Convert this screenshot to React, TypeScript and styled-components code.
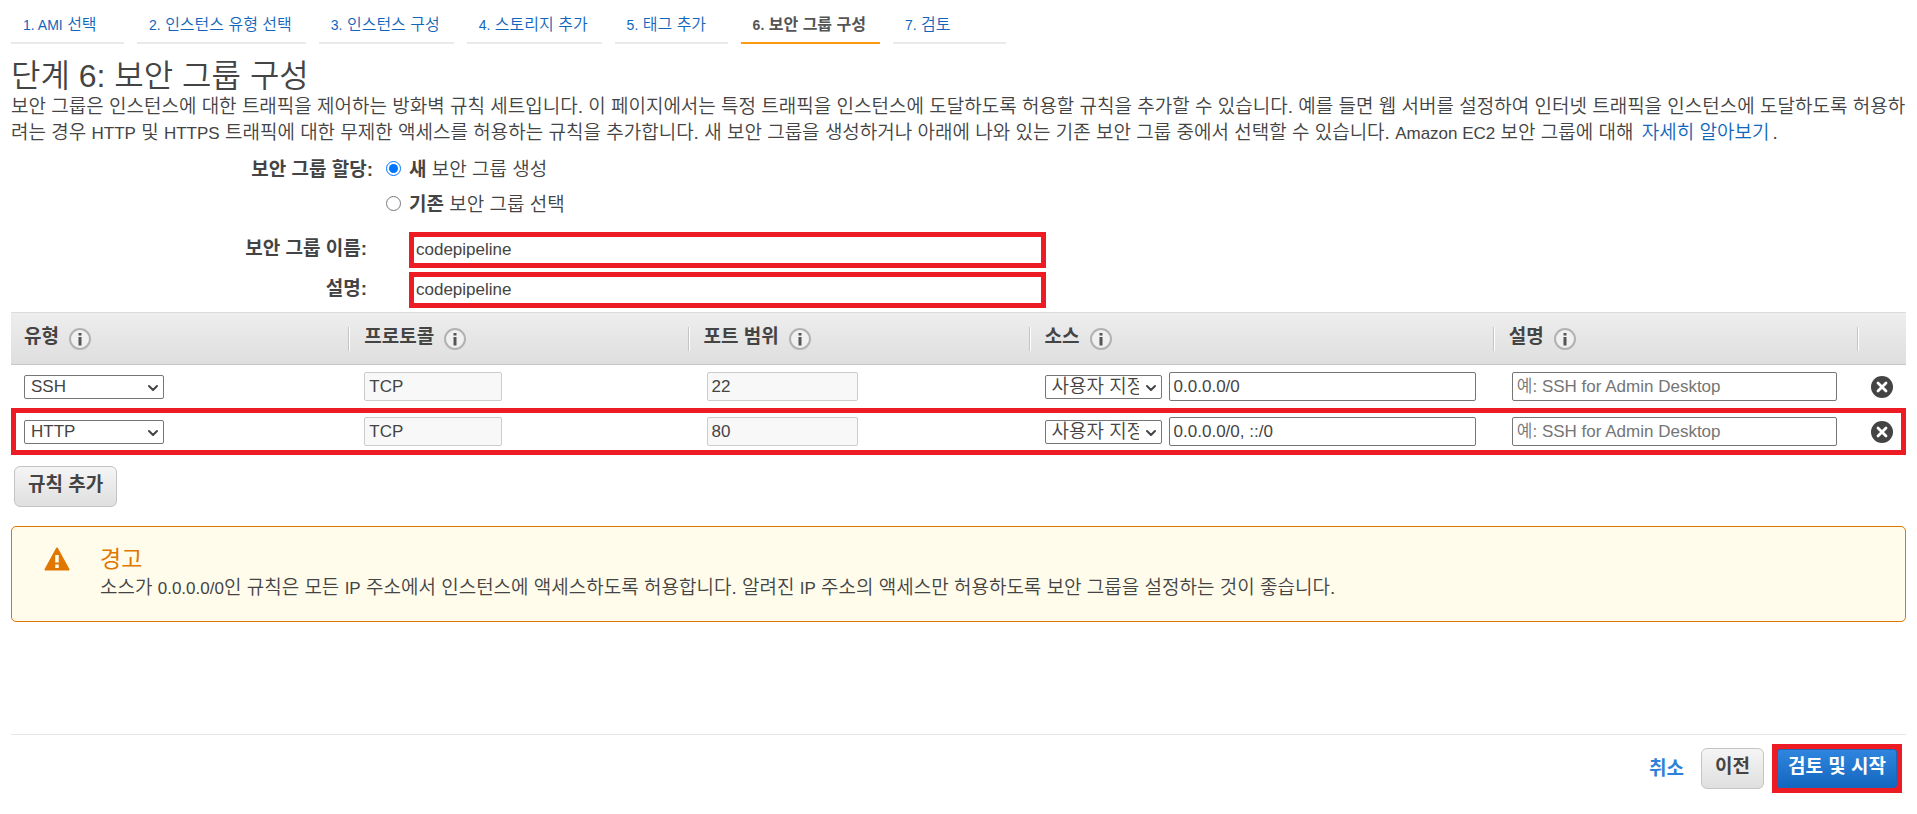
import React from "react";
import styled, { createGlobalStyle, css } from "styled-components";
import { ChevronDown } from "lucide-react";

const GlobalStyle = createGlobalStyle`
  * { box-sizing: border-box; }
  body {
    margin: 0;
    background: #fff;
    color: #444;
    font-family: "Liberation Sans", "Noto Sans CJK KR", sans-serif;
    font-size: 19px;
    font-weight: 350;
    line-height: 26px;
  }
  input, select, button { font: inherit; color: inherit; }
  b { font-weight: 700; }
`;

const RED = "#ed1c24";

const Page = styled.div`
  padding: 0 11px 22px;
`;

const Steps = styled.ol`
  display: flex;
  gap: 13px;
  margin: 0;
  padding: 0;
  list-style: none;
`;

const Step = styled.li<{ $active?: boolean }>`
  min-width: 113px;
  height: 44px;
  padding: 13px 14px 0 12px;
  border-bottom: 2px solid ${(p) => (p.$active ? "#ff9914" : "#eaeaea")};
  font-size: 16px;
  line-height: 24px;
  white-space: nowrap;
`;

const StepLink = styled.a<{ $active?: boolean }>`
  color: ${(p) => (p.$active ? "#555" : "#1166bb")};
  font-weight: ${(p) => (p.$active ? 700 : 350)};
  text-decoration: none;
`;

const Latin = styled.span<{ $size?: number }>`
  font-size: ${(p) => p.$size ?? 17}px;
`;

const Title = styled.h1`
  margin: 15px 0 0;
  font-size: 32px;
  line-height: 35px;
  font-weight: 350;
`;

const Intro = styled.p`
  margin: 0;
`;

const TextLink = styled.a`
  margin: 0 3px;
  color: #1166bb;
  text-decoration: none;
`;

const Form = styled.form`
  display: flex;
  flex-direction: column;
  padding-top: 10px;
`;

const Group = styled.fieldset`
  display: grid;
  grid-template-columns: 362px 1fr;
  column-gap: 13px;
  margin: 0 0 14px;
  padding: 0;
  border: 0;
`;

const GroupLabel = styled.span`
  font-weight: 700;
  text-align: right;
`;

const Options = styled.div`
  display: flex;
  flex-direction: column;
  gap: 9px;
`;

const Option = styled.label`
  display: flex;
  align-items: center;
  gap: 8px;
`;

const Radio = styled.input`
  width: 15px;
  height: 15px;
  margin: 0 0 3px;
  accent-color: #0075ff;
`;

const Field = styled.div`
  display: grid;
  grid-template-columns: 356px 33.6% 1fr;
  column-gap: 42px;
  align-items: center;
  margin-bottom: 4px;
`;

const FieldLabel = styled.label`
  padding-bottom: 3px;
  font-weight: 700;
  text-align: right;
`;

const MarkedInput = styled.input`
  width: 100%;
  height: 36px;
  padding: 0 2px;
  border: 5px solid ${RED};
  border-radius: 0;
  font-size: 17px;
`;

const Table = styled.table`
  width: 100%;
  border-collapse: collapse;
  table-layout: fixed;
`;

const Col = styled.col<{ $share?: number }>`
  width: ${(p) => (p.$share ? `${p.$share}%` : "auto")};
`;

const HeadRow = styled.tr`
  height: 53px;
  background: linear-gradient(#eee, #dedede);
  box-shadow: inset 0 1px #dcdcdc, inset 0 -1px #c6c6c6;
`;

const Th = styled.th`
  padding: 0;
  text-align: left;
  &:first-child > div { border-left: 0; box-shadow: none; padding-left: 13px; }
`;

const ThInner = styled.div`
  display: flex;
  align-items: center;
  gap: 10px;
  height: 24px;
  padding-left: 15px;
  border-left: 1px solid #c4c4c4;
  box-shadow: inset 1px 0 #fff;
  font-weight: 700;
`;

const ThText = styled.span`
  padding-bottom: 4px;
`;

const InfoButton = styled.button`
  display: block;
  width: 22px;
  height: 22px;
  padding: 0;
  border: 0;
  background: none;
  cursor: pointer;
`;

const Row = styled.tr<{ $marked?: boolean }>`
  height: ${(p) => (p.$marked ? 47 : 43)}px;
  ${(p) =>
    p.$marked &&
    css`
      outline: 5px solid ${RED};
      outline-offset: -5px;
    `}
`;

const Td = styled.td`
  padding: 0 20px 0 19px;
  &:first-child { padding-left: 13px; }
  &:nth-child(2), &:nth-child(4) { padding: 0 17px 0 16px; }
`;

const Cell = styled.div`
  display: flex;
  align-items: center;
  gap: 7px;
`;

const TextInput = styled.input<{ $share?: number }>`
  flex: ${(p) => (p.$share ? "none" : "1")};
  width: ${(p) => p.$share ?? 100}%;
  min-width: 0;
  height: 29px;
  padding: 0 4px;
  border: 1px solid #767676;
  border-radius: 2px;
  background: #fff;
  font-size: 17px;
  &:disabled { border-color: #ccc; background: #f8f8f8; color: #444; }
  &::placeholder { color: #757575; opacity: 1; }
`;

const SelectBox = styled.div<{ $width: number }>`
  position: relative;
  flex: none;
  width: ${(p) => p.$width}px;
  height: 24px;
  svg {
    position: absolute;
    top: 5px;
    right: 3px;
    pointer-events: none;
  }
`;

const Select = styled.select<{ $korean?: boolean }>`
  display: block;
  appearance: none;
  width: 100%;
  height: 24px;
  padding: 0 22px 0 6px;
  border: 1px solid #767676;
  border-radius: 2px;
  background: #fff;
  font-size: ${(p) => (p.$korean ? 19 : 17)}px;
  line-height: 22px;
`;

const IconButton = styled.button`
  display: block;
  width: 22px;
  height: 22px;
  margin-left: -5px;
  padding: 0;
  border: 0;
  background: none;
  cursor: pointer;
`;

const Button = styled.button<{ $primary?: boolean }>`
  height: ${(p) => (p.$primary ? 39 : 41)}px;
  padding: 0 ${(p) => (p.$primary ? 10 : 13)}px 4px;
  border: 1px solid ${(p) => (p.$primary ? "#1a66b8" : "#c4c4c4")};
  border-radius: ${(p) => (p.$primary ? 3 : 6)}px;
  background: ${(p) =>
    p.$primary ? "linear-gradient(#2f85dd, #1467bf)" : "linear-gradient(#f5f5f5, #dfdfdf)"};
  color: ${(p) => (p.$primary ? "#fff" : "#444")};
  font-weight: 700;
  white-space: nowrap;
  cursor: pointer;
`;

const AddRule = styled.div`
  padding: 11px 3px 19px;
  display: flex;
`;

const Alert = styled.section`
  display: flex;
  gap: 30px;
  min-height: 96px;
  padding: 16px 32px;
  border: 1px solid #e07700;
  border-radius: 5px;
  background: #fffcec;
  svg { flex: none; margin-top: 4px; }
`;

const AlertTitle = styled.h2`
  margin: 0;
  color: #e07700;
  font-size: 23px;
  line-height: 32px;
  font-weight: 400;
`;

const AlertText = styled.p`
  margin: 0;
`;

const Footer = styled.footer`
  display: flex;
  justify-content: flex-end;
  align-items: center;
  margin-top: 112px;
  padding: 9px 4px 0 0;
  border-top: 1px solid #e6e6e6;
`;

const Cancel = styled.a`
  margin-right: 17px;
  color: #2f80d8;
  font-weight: 700;
  text-decoration: none;
`;

const Marked = styled.div`
  display: flex;
  margin-left: 8px;
  border: 5px solid ${RED};
  background: ${RED};
`;

const InfoIcon = () => (
  <svg width="22" height="22" viewBox="0 0 22 22" aria-hidden="true">
    <circle cx="11" cy="11" r="10" fill="#f0f0f0" stroke="#b2b2b2" strokeWidth="2" />
    <path d="M11 5v2.6M11 9v8.5" stroke="#555" strokeWidth="3" />
  </svg>
);

const DeleteIcon = () => (
  <svg width="22" height="22" viewBox="0 0 22 22" aria-hidden="true">
    <circle cx="11" cy="11" r="11" fill="#444" />
    <path d="M7 7l8 8M15 7l-8 8" stroke="#fff" strokeWidth="2.8" strokeLinecap="round" />
  </svg>
);

const WarningIcon = () => (
  <svg width="26" height="24" viewBox="0 0 26 24" aria-hidden="true">
    <path d="M13 1.5L24.5 22.5H1.5Z" fill="#e07700" stroke="#e07700" strokeWidth="2" strokeLinejoin="round" />
    <path d="M13 8v7.5M13 17.5v3.5" stroke="#fffcec" strokeWidth="3.5" />
  </svg>
);

const steps = [
  ["1. AMI", "선택"],
  ["2.", "인스턴스 유형 선택"],
  ["3.", "인스턴스 구성"],
  ["4.", "스토리지 추가"],
  ["5.", "태그 추가"],
  ["6.", "보안 그룹 구성"],
  ["7.", "검토"],
];

const columns = ["유형", "프로토콜", "포트 범위", "소스", "설명"];

const rules = [
  { type: "SSH", port: "22", source: "0.0.0.0/0" },
  { type: "HTTP", port: "80", source: "0.0.0.0/0, ::/0", marked: true },
];

export default function App() {
  return (
    <Page>
      <GlobalStyle />
      <nav aria-label="단계">
        <Steps>
          {steps.map(([prefix, name], i) => (
            <Step key={prefix} $active={i === 5}>
              <StepLink href="#" $active={i === 5} aria-current={i === 5 ? "step" : undefined}>
                <Latin $size={14}>{prefix}</Latin> {name}
              </StepLink>
            </Step>
          ))}
        </Steps>
      </nav>

      <Title>단계 6: 보안 그룹 구성</Title>
      <Intro>
        보안 그룹은 인스턴스에 대한 트래픽을 제어하는 방화벽 규칙 세트입니다. 이 페이지에서는 특정 트래픽을 인스턴스에 도달하도록 허용할 규칙을
        추가할 수 있습니다. 예를 들면 웹 서버를 설정하여 인터넷 트래픽을 인스턴스에 도달하도록 허용하려는 경우 <Latin>HTTP</Latin> 및{" "}
        <Latin>HTTPS</Latin> 트래픽에 대한 무제한 액세스를 허용하는 규칙을 추가합니다. 새 보안 그룹을 생성하거나 아래에 나와 있는 기존 보안 그룹
        중에서 선택할 수 있습니다. <Latin>Amazon EC2</Latin> 보안 그룹에 대해 <TextLink href="#">자세히 알아보기</TextLink>.
      </Intro>

      <Form onSubmit={(e) => e.preventDefault()}>
        <Group aria-labelledby="assign">
          <GroupLabel id="assign">보안 그룹 할당:</GroupLabel>
          <Options>
            <Option>
              <Radio type="radio" name="group" defaultChecked />
              <span>
                <b>새</b> 보안 그룹 생성
              </span>
            </Option>
            <Option>
              <Radio type="radio" name="group" />
              <span>
                <b>기존</b> 보안 그룹 선택
              </span>
            </Option>
          </Options>
        </Group>
        <Field>
          <FieldLabel htmlFor="name">보안 그룹 이름:</FieldLabel>
          <MarkedInput id="name" defaultValue="codepipeline" />
        </Field>
        <Field>
          <FieldLabel htmlFor="desc">설명:</FieldLabel>
          <MarkedInput id="desc" defaultValue="codepipeline" />
        </Field>
      </Form>

      <Table>
        <colgroup>
          <Col $share={17.8} />
          <Col $share={17.9} />
          <Col $share={18} />
          <Col $share={24.5} />
          <Col $share={19.2} />
          <Col />
        </colgroup>
        <thead>
          <HeadRow>
            {columns.map((name) => (
              <Th key={name} scope="col">
                <ThInner>
                  <ThText>{name}</ThText>
                  <InfoButton type="button" aria-label={`${name} 정보`}>
                    <InfoIcon />
                  </InfoButton>
                </ThInner>
              </Th>
            ))}
            <Th>
              <ThInner />
            </Th>
          </HeadRow>
        </thead>
        <tbody>
          {rules.map((rule) => (
            <Row key={rule.type} $marked={rule.marked}>
              <Td>
                <SelectBox $width={140}>
                  <Select aria-label="유형" defaultValue={rule.type}>
                    <option>SSH</option>
                    <option>HTTP</option>
                  </Select>
                  <ChevronDown size={16} strokeWidth={3} />
                </SelectBox>
              </Td>
              <Td>
                <Cell>
                  <TextInput $share={45} aria-label="프로토콜" defaultValue="TCP" disabled />
                </Cell>
              </Td>
              <Td>
                <Cell>
                  <TextInput $share={50} aria-label="포트 범위" defaultValue={rule.port} disabled />
                </Cell>
              </Td>
              <Td>
                <Cell>
                  <SelectBox $width={117}>
                    <Select $korean aria-label="소스 유형">
                      <option>사용자 지정</option>
                    </Select>
                    <ChevronDown size={16} strokeWidth={3} />
                  </SelectBox>
                  <TextInput aria-label="소스" defaultValue={rule.source} />
                </Cell>
              </Td>
              <Td>
                <Cell>
                  <TextInput aria-label="설명" placeholder="예: SSH for Admin Desktop" />
                </Cell>
              </Td>
              <Td>
                <IconButton type="button" aria-label="삭제">
                  <DeleteIcon />
                </IconButton>
              </Td>
            </Row>
          ))}
        </tbody>
      </Table>

      <AddRule>
        <Button type="button">규칙 추가</Button>
      </AddRule>

      <Alert role="alert">
        <WarningIcon />
        <div>
          <AlertTitle>경고</AlertTitle>
          <AlertText>
            소스가 <Latin>0.0.0.0/0</Latin>인 규칙은 모든 <Latin>IP</Latin> 주소에서 인스턴스에 액세스하도록 허용합니다. 알려진{" "}
            <Latin>IP</Latin> 주소의 액세스만 허용하도록 보안 그룹을 설정하는 것이 좋습니다.
          </AlertText>
        </div>
      </Alert>

      <Footer>
        <Cancel href="#">취소</Cancel>
        <Button type="button">이전</Button>
        <Marked>
          <Button type="button" $primary>
            검토 및 시작
          </Button>
        </Marked>
      </Footer>
    </Page>
  );
}
